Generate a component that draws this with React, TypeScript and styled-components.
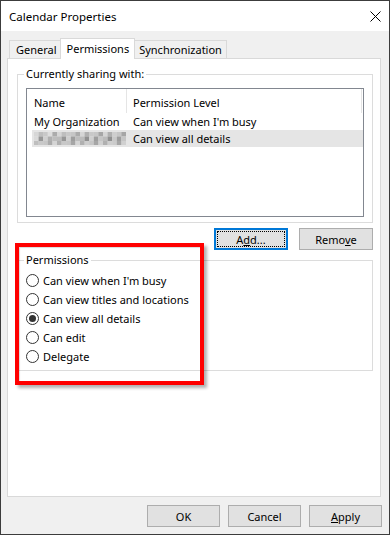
import React from "react";
import styled, { createGlobalStyle } from "styled-components";

const GlobalStyle = createGlobalStyle`
  html, body {
    margin: 0;
    padding: 0;
    background: #fff;
  }
  body {
    font-family: "Noto Sans", "Segoe UI", sans-serif;
    font-size: 11px;
    color: #000;
  }
  * {
    box-sizing: border-box;
  }
`;

const Window = styled.div`
  width: 390px;
  height: 535px;
  border: 1px solid #3c3c3c;
  display: flex;
  flex-direction: column;
  background: #f0f0f0;
`;

const TitleBar = styled.div`
  height: 30px;
  background: #fff;
  display: flex;
  align-items: center;
  justify-content: space-between;
  padding: 0 8px 0 8px;
  font-size: 11.5px;
`;

const Body = styled.div`
  flex: 1;
  display: flex;
  flex-direction: column;
  padding: 7px 8px 0 6px;
`;

const TabStrip = styled.div`
  height: 20px;
  display: flex;
  align-items: flex-end;
  padding-left: 2px;
`;

const Tab = styled.div<{ $active?: boolean }>`
  position: relative;
  height: ${(p) => (p.$active ? "21px" : "18px")};
  margin: ${(p) => (p.$active ? "0 -2px -1px -2px" : "0 0 0 -1px")};
  padding: ${(p) => (p.$active ? "0 5px 2px 6px" : "0 4px 0 6px")};
  background: ${(p) => (p.$active ? "#fff" : "#f0f0f0")};
  border: 1px solid #d9d9d9;
  border-bottom: none;
  z-index: ${(p) => (p.$active ? 2 : 1)};
  display: flex;
  align-items: center;
  white-space: nowrap;
  &:first-child {
    margin-left: 0;
  }
`;

const Panel = styled.div`
  flex: 1;
  position: relative;
  background: #fff;
  border: 1px solid #d9d9d9;
  padding: 8px 7px 0 9px;
  display: flex;
  flex-direction: column;
`;

const GroupBox = styled.fieldset<{ $top?: number; $bottom: number }>`
  margin: ${(p) => p.$top ?? 0}px 0 0 0;
  padding: 0 8px ${(p) => p.$bottom}px;
  border: 1px solid #dcdcdc;
  min-width: 0;
`;

const Legend = styled.legend`
  padding: 0 2px;
  margin-left: -2px;
  line-height: 14px;
`;

const ListBox = styled.div`
  margin-top: 7px;
  height: 129px;
  border: 1px solid #828790;
  background: #fff;
`;

const ListHeader = styled.div`
  display: grid;
  grid-template-columns: 100px 235px;
  height: 24px;
`;

const HeaderCell = styled.div<{ $pad: number }>`
  display: flex;
  align-items: center;
  padding: 2px 0 0 ${(p) => p.$pad}px;
  border-right: 1px solid #e5e5e5;
`;

const Row = styled.div<{ $selected?: boolean }>`
  display: grid;
  grid-template-columns: 95px 1fr;
  height: 17px;
  margin-left: 5px;
  background: ${(p) => (p.$selected ? "#e5e5e5" : "transparent")};
`;

const Cell = styled.div<{ $pad: number }>`
  display: flex;
  align-items: center;
  padding-left: ${(p) => p.$pad}px;
  white-space: nowrap;
`;

const ButtonRow = styled.div`
  display: flex;
  justify-content: flex-end;
  gap: 11px;
  margin-top: 5px;
`;

const Button = styled.button<{ $width: number; $focused?: boolean }>`
  position: relative;
  width: ${(p) => p.$width}px;
  height: 22px;
  padding: 0;
  font: inherit;
  color: #000;
  background: #e1e1e1;
  border: 1px solid ${(p) => (p.$focused ? "#0078d7" : "#adadad")};
  box-shadow: ${(p) => (p.$focused ? "inset 0 0 0 1px #0078d7" : "none")};
  &::after {
    content: "";
    display: ${(p) => (p.$focused ? "block" : "none")};
    position: absolute;
    inset: 2px;
    border: 1px dotted #000;
  }
`;

const Key = styled.span`
  text-decoration: underline;
`;

const RadioList = styled.div`
  margin-top: 4px;
  display: flex;
  flex-direction: column;
`;

const RadioRow = styled.label`
  height: 19px;
  display: flex;
  align-items: center;
  gap: 4px;
`;

const Radio = styled.span<{ $checked?: boolean }>`
  position: relative;
  width: 13px;
  height: 13px;
  border-radius: 50%;
  border: 1px solid #333;
  background: #fff;
  &::after {
    content: "";
    display: ${(p) => (p.$checked ? "block" : "none")};
    position: absolute;
    inset: 2px;
    border-radius: 50%;
    background: #333;
  }
`;

const Highlight = styled.div`
  position: absolute;
  left: 7px;
  top: 184px;
  width: 189px;
  height: 142px;
  border: 4px solid #ff0000;
  box-shadow: 3px 3px 3px rgba(0, 0, 0, 0.3), inset 1px 1px 1px rgba(0, 0, 0, 0.15);
  pointer-events: none;
`;

const Footer = styled.div`
  height: 37px;
  display: flex;
  justify-content: flex-end;
  align-items: flex-start;
  gap: 8px;
  padding-top: 8px;
  margin-right: -1px;
`;

const BLUR_SHADES = [
  "#d2d2d2", "#b5b5b5", "#c8c8c8", "#9e9e9e", "#bdbdbd", "#dadada", "#a8a8a8", "#c2c2c2",
  "#909090", "#cfcfcf", "#b0b0b0", "#d8d8d8", "#a3a3a3", "#c5c5c5", "#bbbbbb", "#979797",
];

const BlurredName = () => {
  const cells = [];
  for (let r = 0; r < 3; r++) {
    for (let c = 0; c < 20; c++) {
      const v = (c * 7 + r * 5 + (c % 3) * 3) % BLUR_SHADES.length;
      cells.push(
        <rect key={`${r}-${c}`} x={c * 4.6} y={r * 4.5} width={4.6} height={4.5} fill={BLUR_SHADES[v]} opacity={r === 1 ? 1 : 0.75} />
      );
    }
  }
  return (
    <svg width="92" height="13" viewBox="0 0 92 13">
      {cells}
    </svg>
  );
};

const CloseIcon = () => (
  <svg width="11" height="11" viewBox="0 0 11 11">
    <path d="M0.5 0.5 L10.5 10.5 M10.5 0.5 L0.5 10.5" stroke="#000" strokeWidth="1" fill="none" />
  </svg>
);

const permissions = [
  "Can view when I'm busy",
  "Can view titles and locations",
  "Can view all details",
  "Can edit",
  "Delegate",
];

export default function App() {
  return (
    <>
      <GlobalStyle />
      <Window>
        <TitleBar>
          <span>Calendar Properties</span>
          <CloseIcon />
        </TitleBar>
        <Body>
          <TabStrip>
            <Tab>General</Tab>
            <Tab $active>Permissions</Tab>
            <Tab>Synchronization</Tab>
          </TabStrip>
          <Panel>
            <GroupBox $bottom={5}>
              <Legend>Currently sharing with:</Legend>
              <ListBox>
                <ListHeader>
                  <HeaderCell $pad={7}>Name</HeaderCell>
                  <HeaderCell $pad={6}>Permission Level</HeaderCell>
                </ListHeader>
                <Row>
                  <Cell $pad={2}>My Organization</Cell>
                  <Cell $pad={6}>Can view when I'm busy</Cell>
                </Row>
                <Row $selected>
                  <Cell $pad={2}>
                    <BlurredName />
                  </Cell>
                  <Cell $pad={6}>Can view all details</Cell>
                </Row>
              </ListBox>
            </GroupBox>
            <ButtonRow>
              <Button $width={74} $focused>
                A<Key>d</Key>d...
              </Button>
              <Button $width={74}>
                Remo<Key>v</Key>e
              </Button>
            </ButtonRow>
            <GroupBox $top={3} $bottom={4}>
              <Legend>Permissions</Legend>
              <RadioList>
                {permissions.map((label) => (
                  <RadioRow key={label}>
                    <Radio $checked={label === "Can view all details"} />
                    {label}
                  </RadioRow>
                ))}
              </RadioList>
            </GroupBox>
            <Highlight />
          </Panel>
          <Footer>
            <Button $width={73}>OK</Button>
            <Button $width={73}>Cancel</Button>
            <Button $width={73}>
              <Key>A</Key>pply
            </Button>
          </Footer>
        </Body>
      </Window>
    </>
  );
}
